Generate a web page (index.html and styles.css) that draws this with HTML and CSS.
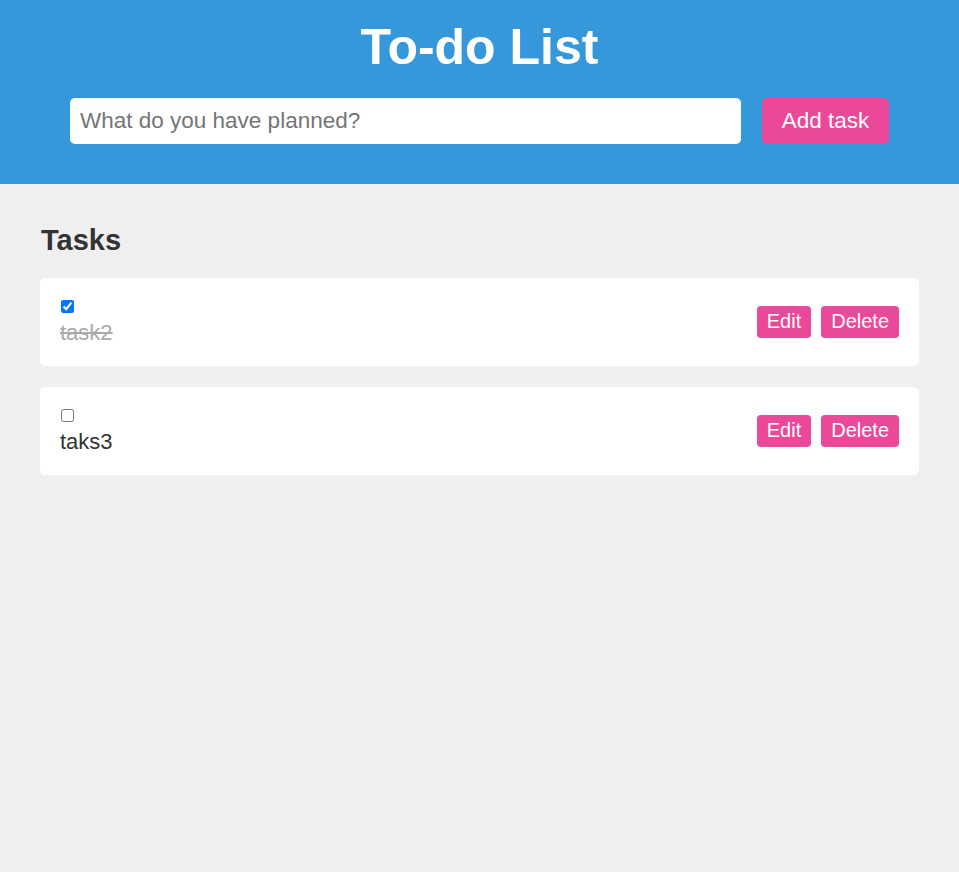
FILE: index.html
```html
<!DOCTYPE html>
<html>
<head>
<meta charset="utf-8">
<title>To-do List</title>
<link rel="stylesheet" href="styles.css">
</head>
<body>
<header class="header">
  <h1 class="title">To-do List</h1>
  <form class="add-form" onsubmit="return false;">
    <input class="task-input" type="text" placeholder="What do you have planned?">
    <button class="add-btn" type="submit">Add task</button>
  </form>
</header>
<main class="main">
  <h2 class="section-title">Tasks</h2>
  <div class="task-list">
    <div class="task">
      <div class="task-content">
        <input class="task-check" type="checkbox" checked>
        <span class="task-text done">task2</span>
      </div>
      <div class="task-actions">
        <button class="btn">Edit</button>
        <button class="btn">Delete</button>
      </div>
    </div>
    <div class="task">
      <div class="task-content">
        <input class="task-check" type="checkbox">
        <span class="task-text">taks3</span>
      </div>
      <div class="task-actions">
        <button class="btn">Edit</button>
        <button class="btn">Delete</button>
      </div>
    </div>
  </div>
</main>
</body>
</html>
```
FILE: styles.css
```css
* { box-sizing: border-box; }
html, body { margin: 0; padding: 0; }
body {
  font-family: "Liberation Sans", Arial, sans-serif;
  background: #efefef;
  color: #333;
  min-height: 100vh;
}
.header {
  background: #3498db;
  padding: 19px 0 40px;
  text-align: center;
}
.title {
  margin: 0 0 22px;
  font-size: 50px;
  line-height: 57px;
  color: #fff;
  font-weight: bold;
}
.add-form {
  display: flex;
  justify-content: center;
  gap: 21px;
}
.task-input {
  width: 671px;
  height: 46px;
  border: none;
  border-radius: 5px;
  padding: 0 10px;
  font-family: inherit;
  font-size: 22.5px;
  color: #333;
  outline: none;
}
.task-input::placeholder { color: #757575; }
.add-btn {
  width: 127px;
  height: 46px;
  border: none;
  border-radius: 5px;
  background: #ec4899;
  color: #fff;
  font-family: inherit;
  font-size: 22.5px;
  padding: 0;
}
.main {
  padding: 40px 40px;
}
.section-title {
  margin: 0 0 21px 1px;
  font-size: 29px;
  line-height: 33px;
  font-weight: bold;
  color: #333;
}
.task-list {
  display: flex;
  flex-direction: column;
  gap: 21px;
}
.task {
  background: #fff;
  border-radius: 5px;
  height: 88px;
  padding: 20px 20px 21px;
  display: flex;
  align-items: center;
  justify-content: space-between;
}
.task-content {
  display: flex;
  flex-direction: column;
  align-items: flex-start;
}
.task-check {
  margin: 2px 0 7px 1px;
  width: 13px;
  height: 13px;
}
.task-text {
  font-size: 22px;
  line-height: 25px;
  color: #333;
}
.task-text.done {
  color: #aaa;
  text-decoration: line-through;
}
.task-actions {
  display: flex;
  gap: 10px;
}
.btn {
  border: none;
  border-radius: 4px;
  background: #ec4899;
  color: #fff;
  font-family: inherit;
  font-size: 20px;
  height: 32px;
  padding: 0 10px;
}
```
